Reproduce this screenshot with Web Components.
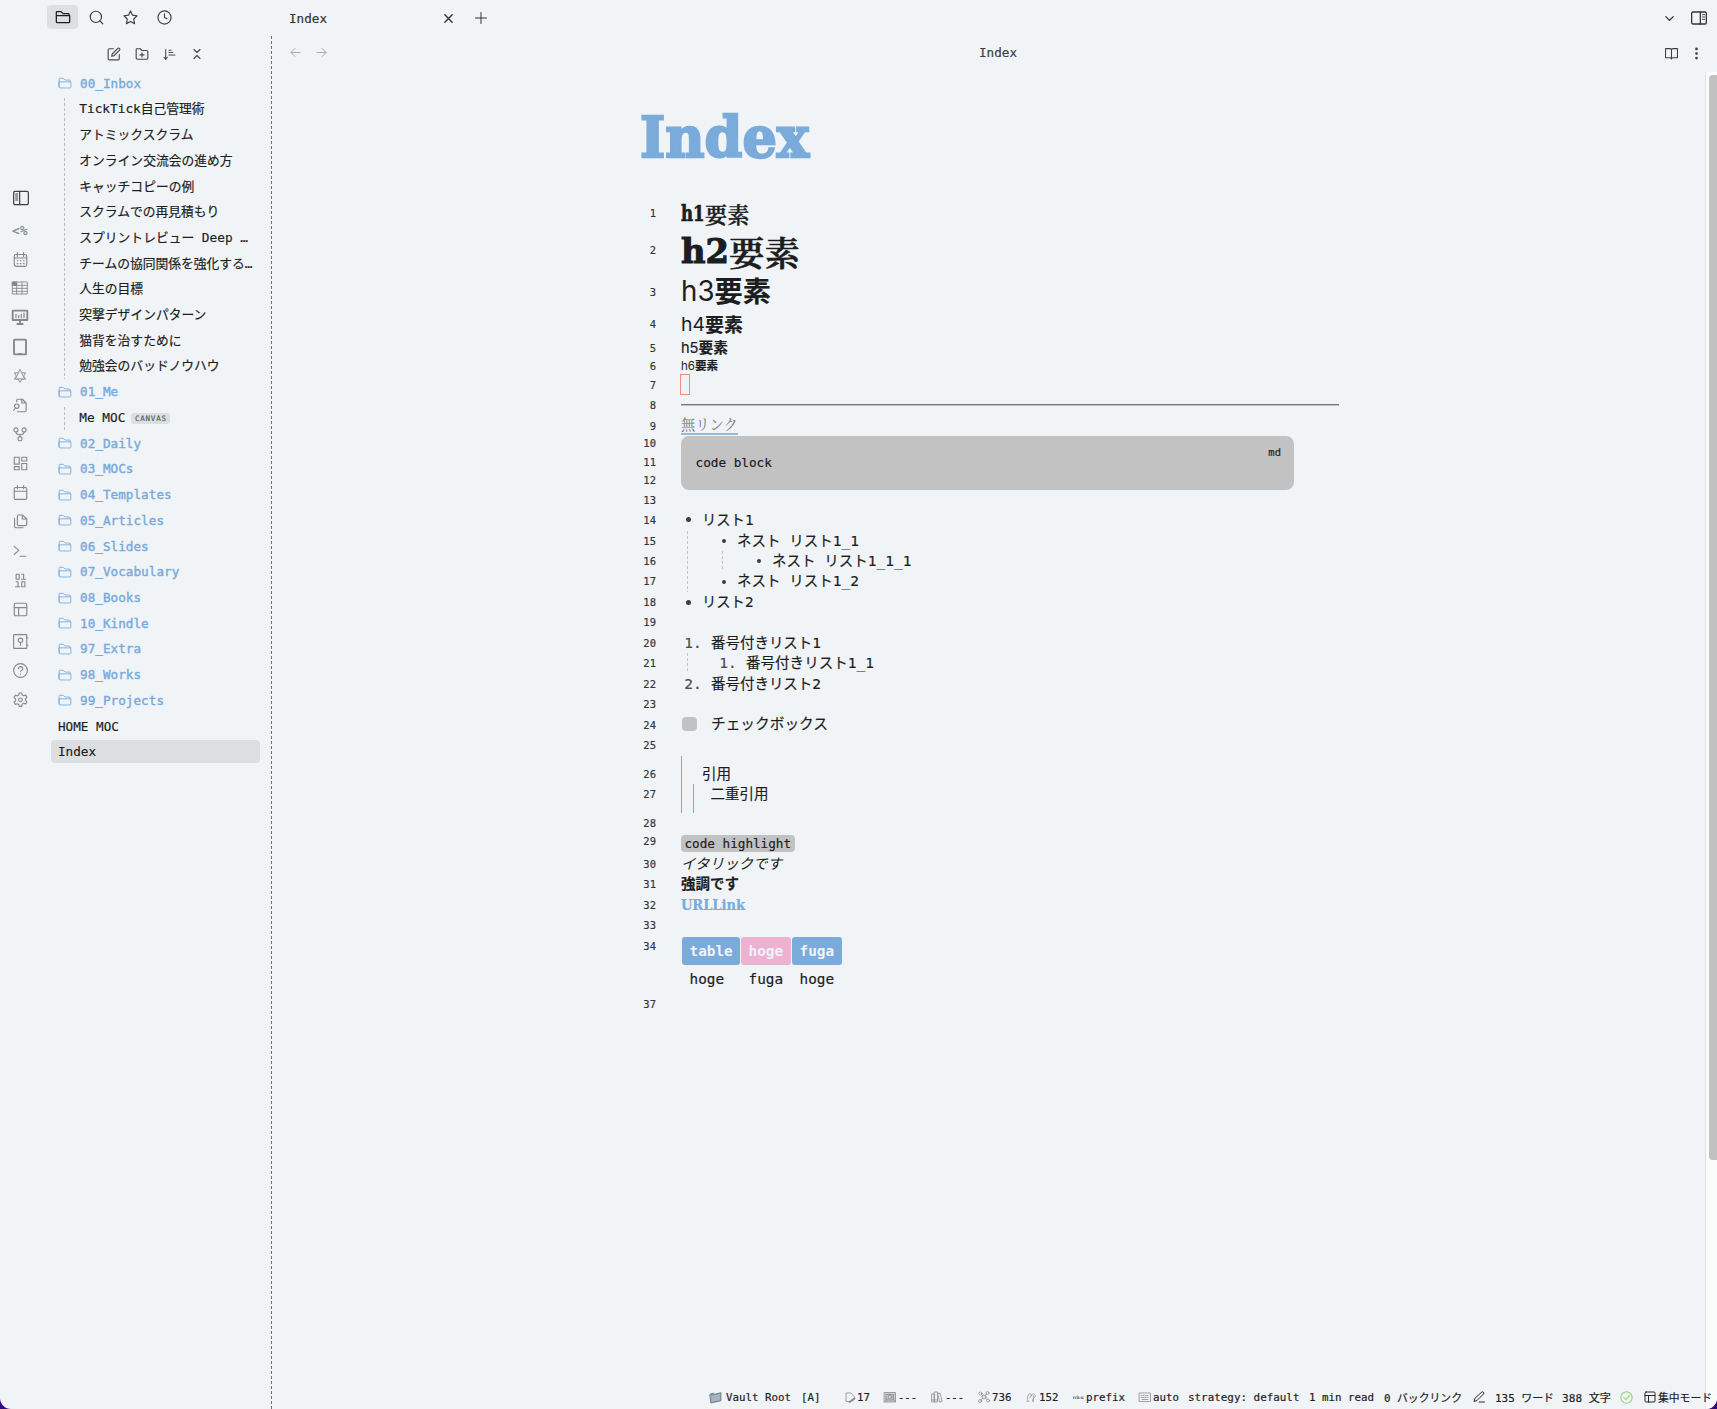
<!DOCTYPE html>
<html lang="ja">
<head>
<meta charset="utf-8">
<title>Index</title>
<style>
html,body{margin:0;height:100%}
body{background:#2e0a86;font-family:"DejaVu Sans Mono","Noto Sans CJK JP",monospace;font-size:12.65px;color:#1c1d1e;overflow:hidden;-webkit-text-stroke:.18px}
</style>
</head>
<body>
<vault-app></vault-app>
<script>
const ICONS={
folder:'<path d="M2 19V5a1 1 0 0 1 1-1h6l3 3h8a1 1 0 0 1 1 1v2M2 10h20v9a1.5 1.5 0 0 1-1.5 1.5h-17A1.5 1.5 0 0 1 2 19z"/>',
search:'<circle cx="11" cy="11" r="9"/><path d="m22 22-4.6-4.6"/>',
star:'<path d="m12 1.500 3.200 6.800 7.300 1-5.300 5.100 1.300 7.400-6.500-3.500-6.500 3.500 1.300-7.400L1.500 9.300l7.300-1z"/>',
clock:'<circle cx="12" cy="12" r="10.500"/><path d="M12 6v6l4 2"/>',
edit:'<path d="M11 3H4a2 2 0 0 0-2 2v15a2 2 0 0 0 2 2h15a2 2 0 0 0 2-2v-7"/><path d="M18.500 2.500a2.100 2.100 0 0 1 3 3L12 15l-4 1 1-4z"/>',
folderplus:'<path d="M4 21a2 2 0 0 1-2-2V4a1 1 0 0 1 1-1h6l3 3h8a2 2 0 0 1 2 2v11a2 2 0 0 1-2 2zM12 10v7M8.500 13.500h7"/>',
sort:'<path d="m2 17 3 4 3-4M5 20V3M11 4h4M11 8.500h7M11 13h11"/>',
collapse:'<path d="m6 21 6-6 6 6M6 3l6 6 6-6"/>',
x:'<path d="M4 4l16 16M20 4 4 20"/>',
plus:'<path d="M12 1v22M1 12h22"/>',
left:'<path d="M22 12H3M11 3l-9 9 9 9"/>',
right:'<path d="M2 12h19M13 3l9 9-9 9"/>',
down:'<path d="m4 8 8 8 8-8"/>',
panelright:'<rect x="1" y="3" width="22" height="18" rx="2"/><path d="M14 3v18" /><path stroke-width="1.300" d="M17 7h3.500M17 10.500h3.500M17 14h3.500"/>',
panelleft:'<rect x="1" y="2" width="22" height="20" rx="2"/><path d="M10 2v20"/><path stroke-width="1.600" d="M4 6h3M4 9h3M4 12h3M4 15h3"/>',
book:'<path d="M1 3h8a3 3 0 0 1 3 3v16a3 3 0 0 0-3-2H1zM23 3h-8a3 3 0 0 0-3 3v16a3 3 0 0 1 3-2h8z"/>',
dots:'<g fill="currentColor"><circle cx="12" cy="3.500" r="1.500"/><circle cx="12" cy="12" r="1.500"/><circle cx="12" cy="20.500" r="1.500"/></g>',
caldots:'<rect x="2" y="4" width="20" height="19" rx="3"/><path d="M7 1v6M17 1v6M2 9.500h20"/><path stroke-linecap="butt" stroke-dasharray="2.500 2.500" d="M6 14h13M6 18.500h13"/>',
table:'<g stroke-width="1.300"><rect x="1" y="3" width="22" height="18"/><path d="M1 8h22M1 12.500h22M1 17h22M7 3v18M15 3v18"/><path fill="currentColor" d="M1 3h6v5H1z"/></g>',
present:'<path stroke-width="2.800" d="M1 2.500h22v14H1zM12 17v5M8 22.500h8"/><path d="M6 13V8M10 13v-3M14 13V8M18 13V6"/>',
tablet:'<rect x="3" y="1" width="18" height="22" rx="1" stroke-width="2.800"/><path d="M10 22h4"/>',
hexa:'<path stroke-width="1.500" d="M12 1l3.200 5.500h6.300L18.400 12l3.100 5.500h-6.300L12 23l-3.200-5.500H2.500L5.600 12 2.500 6.500h6.300zM9 7l-4 8.500M15 7l4 8.500M7 17h10"/>',
filesearch:'<path d="M6 6V3.500A1.500 1.500 0 0 1 7.500 2H15l6 6v12a2 2 0 0 1-2 2H7M14 2v6h7"/><circle cx="6" cy="13" r="3.500"/><path d="m1 20 3-4"/>',
fork:'<circle cx="5" cy="5" r="3.500"/><circle cx="19" cy="5" r="3.500"/><circle cx="12" cy="20" r="3.500"/><path d="M5 9c0 3 2 4 7 4s7-1 7-4M12 13v3"/>',
dash:'<path d="M2 2h8v11H2zM14 2h8v6h-8zM14 12h8v10h-8zM2 17h8v5H2z"/>',
cal:'<rect x="2" y="4" width="20" height="19" rx="2"/><path d="M7 1v5M17 1v5M2 10h20"/>',
files:'<path d="M15 1.500H9a2 2 0 0 0-2 2v13a2 2 0 0 0 2 2h11a2 2 0 0 0 2-2V8zM15 2v6h6"/><path d="M2.500 7v13a2 2 0 0 0 2 2H16"/>',
term:'<path d="m2 4 8 7-8 7M12 21h10"/>',
binary:'<rect x="5" y="2" width="5" height="8"/><path d="M14 2h3v8M13.500 10H20"/><path d="M5 14h3v8M4 22h7"/><rect x="14" y="14" width="5" height="8"/>',
layout:'<rect x="2" y="2" width="20" height="20" rx="2"/><path d="M2 9h20M9 9v13"/>',
vault:'<rect x="1" y="1" width="21" height="22" rx="1"/><circle cx="12" cy="10" r="3.500"/><path d="M12 14v4M22 6h2M22 18h2"/>',
help:'<circle cx="12" cy="12" r="11"/><path d="M8.500 9a3.500 3.500 0 0 1 7 .500c0 2-3.500 2.500-3.500 4.500M12 17.500v.500"/>',
gear:'<path d="M10 1.500h4l.700 3.300 2.300 1.300 3.300-1.100 2 3.500-2.500 2.300v2.600l2.500 2.300-2 3.500-3.300-1.100-2.300 1.300L14 23h-4l-.700-2.900L7 18.800l-3.300 1.100-2-3.500 2.500-2.300v-2.600L1.700 8.600l2-3.500 3.300 1.100 2.300-1.300z"/><circle cx="12" cy="12.500" r="3"/>',
sfolder:'<path fill="#8e9aa6" stroke="#697684" d="M2 6l6-2 3 2 11-3v15L4 22z"/><path fill="#aab4be" stroke="none" d="M4 9l17-4-1 12L5 20z"/>',
note:'<path d="M12 21H4V4h10l7 8-2 6"/><path stroke-width="4" d="m11 22 10-7"/>',
photo:'<path d="M1 3h22v19H1z" fill="#ccc"/><path d="M5 7h14v11H5z"/><circle cx="12" cy="12" r="4"/><path d="M1 22 7 16M23 22l-6-6"/>',
books:'<path d="M2 6h5v16H2zM7 2h6v20H7zM14 5l4-1 4 17-4 1zM3 18h9"/>',
graph:'<circle cx="5" cy="5" r="3"/><circle cx="19" cy="4" r="3"/><circle cx="12" cy="12" r="4"/><circle cx="4" cy="20" r="3"/><circle cx="20" cy="19" r="3"/><path d="M7 7l3 3M14 10l3-4M9 14l-3 4M15 14l3 3"/>',
link:'<path d="M3 18c0-7 1-14 6-14s2 9-1 9M11 9c2-7 10-6 9 0s-7 5-6 11M2 20h5M16 8v13"/>',
abc:'<path stroke-width="2.500" d="M1 14v-3h4v3M9 9v5h4v-3H9M22 11h-4v3h4"/>',
kbd:'<rect x="1" y="4" width="22" height="17"/><path stroke-dasharray="2 2" d="M4 9h16M4 13h16"/><path d="M6 17h12"/>',
pen:'<path d="M17 2.500a2.500 2.500 0 0 1 4 3.500L8 19l-6 2 2-6zM12 22h11"/>',
check:'<circle cx="12" cy="12" r="10.500"/><path d="m7 12 4 4 6-7"/>'
};
const ic=(n,s=16,extra='')=>`<ui-icon name="${n}" size="${s}" ${extra}></ui-icon>`;
const fit=(t,w,style='')=>`<fit-text w="${w}" style="${style}">${t}</fit-text>`;
/* Vertical flow of items given as [centre, height, html]; the gaps become margins. */
const stack=(items,start)=>{let e=start;return items.map(([c,h,html,cls=''])=>{const m=c-h/2-e;e=c+h/2;return `<div class="row ${cls}" style="height:${h}px;margin-top:${m.toFixed(2)}px">${html}</div>`}).join('')};
/* Horizontal flow of items given as [left, width, html]. */
const line=(items,start)=>{let e=start;return items.map(([x,w,html])=>{const m=x-e;e=x+w;return `<span class="cell" style="width:${w}px;margin-left:${m.toFixed(2)}px">${html}</span>`}).join('')};
const FLOW='.row{display:flex;align-items:center;white-space:nowrap}.cell{display:flex;flex:none;align-items:center;justify-content:center;white-space:nowrap}';

class Base extends HTMLElement{
 connectedCallback(){ if(this.shadowRoot) return; const r=this.attachShadow({mode:'open'}); r.innerHTML=`<style>:host{display:block;box-sizing:border-box}${FLOW}${this.css()}</style>${this.html()}`; this.ready&&this.ready(); }
 css(){return ''} html(){return '<slot></slot>'}
}
const def=(n,c)=>customElements.define(n,c);

def('ui-icon',class extends Base{
 css(){return ':host{display:inline-flex;flex:none}svg{display:block}'}
 html(){const s=this.getAttribute('size'),w=this.getAttribute('sw')||1.9;return `<svg width="${s}" height="${s}" viewBox="0 0 24 24" fill="none" stroke="currentColor" stroke-width="${w}" stroke-linejoin="round" stroke-linecap="round" overflow="visible">${ICONS[this.getAttribute('name')]}</svg>`}
});
def('fit-text',class extends Base{
 css(){return `:host{display:inline-block;flex:none;width:${this.getAttribute('w')}px;white-space:pre}span{display:inline-block;transform-origin:0 50%}`}
 html(){return '<span><slot></slot></span>'}
 ready(){const s=this.shadowRoot.querySelector('span');s.style.transform=`scaleX(${this.getAttribute('w')/s.getBoundingClientRect().width})`}
});
def('side-ribbon',class extends Base{
 css(){return ':host{width:40px;flex:none;color:#858789}.row{justify-content:center}.dark{color:#3c3e40;padding-left:2px}.t{font-size:12.500px;letter-spacing:.4px;font-variant-ligatures:none;-webkit-text-stroke:.2px}'}
 html(){const L=[['panelleft',197.500,16],['',230],['caldots',259.500,15],['table',288,16],['present',317,16],['tablet',346.500,16],['hexa',375.500,14],['filesearch',405,15],['fork',434,14],['dash',463.500,15],['cal',492.500,15],['files',521.500,15],['term',550.500,14],['binary',580,15],['layout',609,15],['vault',641,15],['help',670,15],['gear',699.500,15]];
 return stack(L.map(([n,c,s])=>[c,18,n?ic(n,s,'sw="1.800"'):'<span class="t">&lt;%</span>',n=='panelleft'?'dark':'']),0)}
});
def('tree-item',class extends Base{
 css(){return `:host{height:25.710px;display:flex;align-items:center;white-space:nowrap;padding-left:18px}
 :host([folder]){color:#78abdb;-webkit-text-stroke:.4px #78abdb;letter-spacing:.03px}:host([folder]) ui-icon{margin-right:8px}
 :host([child]){padding-left:0;font-size:12.780px}:host([child]) .box{line-height:17px;margin-top:-.500px}
 :host([active]) .box{background:#dbdfe0;border-radius:4px;width:209px;height:23px;line-height:23px;box-sizing:border-box;padding-left:7.500px;margin-left:-7.500px}`}
 html(){return (this.hasAttribute('folder')?ic('folder',14,'sw="1.500"'):'')+'<div class="box"><slot></slot></div>'}
});
def('tree-group',class extends Base{css(){return ':host{margin-left:24px;padding-left:15.300px;background:repeating-linear-gradient(#b9bcbf 0 3px,transparent 3px 5px) 0 2px/1px 100% no-repeat}'}});
def('canvas-tag',class extends Base{css(){return ':host{display:inline-block;background:#dcdfe0;color:#5b5d5f;border-radius:3px;font-size:7.500px;line-height:11px;height:11px;padding:0 3.500px;margin-left:6px;letter-spacing:.8px;vertical-align:1px;-webkit-text-stroke:.2px}'}});
def('file-sidebar',class extends Base{
 css(){return `:host{width:231px;flex:none;color:#1c1d1e}.tabs{height:34px;display:flex;color:#3f4143}.tools{color:#444648;height:36.600px;display:flex;padding-top:4px;box-sizing:border-box}.on{background:#dce0e1;color:#1d1e20;height:24px;width:31px;margin:5px 0 0 7px;border-radius:4px;display:flex;align-items:center;justify-content:center}`}
 html(){const f=n=>`<tree-item folder>${n}</tree-item>`,c=n=>`<tree-item child>${n}</tree-item>`;
 return `<div class="tabs"><div class="on">${ic('folder',16)}</div>${line([[88.500,16,ic('search',15)],[122.500,16,ic('star',15)],[156,16,ic('clock',15)]],78)}</div>
 <div class="tools">${line([[106.500,15,ic('edit',14)],[134.500,15,ic('folderplus',14)],[162,15,ic('sort',13)],[189,15,ic('collapse',12,'sw="2.300"')]],40)}</div>
 ${f('00_Inbox')}<tree-group>${['TickTick自己管理術','アトミックスクラム','オンライン交流会の進め方','キャッチコピーの例','スクラムでの再見積もり','スプリントレビュー Deep …','チームの協同関係を強化する…','人生の目標','突撃デザインパターン','猫背を治すために','勉強会のバッドノウハウ'].map(c).join('')}</tree-group>
 ${f('01_Me')}<tree-group>${c('Me MOC<canvas-tag>CANVAS</canvas-tag>')}</tree-group>
 ${['02_Daily','03_MOCs','04_Templates','05_Articles','06_Slides','07_Vocabulary','08_Books','10_Kindle','97_Extra','98_Works','99_Projects'].map(f).join('')}
 <tree-item>HOME MOC</tree-item><tree-item active>Index</tree-item>`}
});
def('pane-divider',class extends Base{css(){return ':host{width:1px;flex:none;margin-top:36px;background:repeating-linear-gradient(#707274 0 3px,transparent 3px 5px)}'}});
def('tab-header',class extends Base{
 css(){return '.a{height:36px;display:flex;color:#303234}.b{height:36px;display:flex;color:#3c3e40}.b{padding-bottom:2px;box-sizing:border-box}.g{color:#9b9ea0}'}
 html(){return `<div class="a">${line([[289,38,fit('Index',38,'margin-top:1px')],[441,14,ic('x',11,'sw="3"')],[473,15,ic('plus',12,'sw="2"')],[1662,15,ic('down',11,'sw="2.800"')],[1691,16,ic('panelright',16)]],272)}</div>
 <div class="b">${line([[289,13,`<span class="g">${ic('left',11)}</span>`],[315,13,`<span class="g">${ic('right',11)}</span>`],[978.500,38,fit('Index',38,'margin-top:-2px')],[1664.500,13,ic('book',13)],[1689,15,ic('dots',13)]],272)}</div>`}
});
def('line-gutter',class extends Base{
 css(){return ':host{width:384px;flex:none;font-size:10.500px;color:#333537}.row{justify-content:flex-end}'}
 html(){const C=[213.300,250,292,324,348,366,385,405,426,443,462,480,500,520,541,561,581,602,622,643,663,684,704,725,745,774,794,823,841,864,884,905,925,946,1004];
 return stack(C.map((c,i)=>[c,12,i==34?'37':i+1]),72)}
});
def('code-block',class extends Base{css(){return ':host{width:613px;height:54px;background:#c2c2c2;border-radius:8px;display:flex;justify-content:space-between;padding:17px 13px 0 14.500px;line-height:19px;font-size:12.700px}small{font-size:10.500px;line-height:12px;margin-top:-7px}'}
 html(){return '<slot></slot><small>md</small>'}});
def('block-quote',class extends Base{css(){return ':host{border-left:1px solid #78abdb;width:100%;height:100%}'}});
def('data-table',class extends Base{
 css(){return `:host{font-size:14.350px}.r{display:grid;grid-template-columns:58px 50px 50px;gap:1px;padding-left:1px}.h>*{height:28px;line-height:28px;background:#7babdb;color:#f0f4f7;font-weight:700;-webkit-text-stroke:0;border-radius:3px;padding-left:7.500px}.h>*:nth-child(2){background:#edb1d1}.d>*{height:28px;line-height:28px;padding-left:7.500px}`}
 html(){return '<div class="r h"><span>table</span><span>hoge</span><span>fuga</span></div><div class="r d"><span>hoge</span><span>fuga</span><span>hoge</span></div>'}});
def('note-body',class extends Base{
 css(){return `:host{width:658px;margin-left:25px;flex:none;font-size:14.500px}
 .serif{font-family:"Noto Serif CJK JP","DejaVu Serif","Liberation Serif","Noto Sans CJK JP",serif}
 .slab{font-family:"DejaVu Serif",serif;font-weight:700}.cjs{font-family:"Noto Serif CJK JP","Noto Serif JP","Noto Sans CJK JP",serif;font-weight:600;-webkit-text-stroke:.4px}
 .thin{font-family:Inter,sans-serif;font-weight:400;-webkit-text-stroke:0}.b{font-weight:700;font-family:"Noto Sans CJK JP",sans-serif}
 .row{line-height:1}
 .caret{width:8px;height:19px;border:1px solid #f58b87;margin-left:-1px}
 .hr{width:658px;height:2px;background:linear-gradient(#737577 50%,#c0c3c5 50%)}
 .link{color:#77797b;border-bottom:2px solid #91bbe3;height:18px;line-height:18px;width:57px;font-size:14.300px;-webkit-text-stroke:0}
 .dot{width:5px;height:5px;border-radius:50%;background:#3b3d3f}.dot.s{width:4px;height:4px}
 .mk{color:#4a4c4e}
 .guide{background:repeating-linear-gradient(#c3c6c8 0 3px,transparent 3px 5px);width:1px;height:20.500px}
 .cb{width:15px;height:14px;border-radius:4px;background:#c2c2c2;margin-top:-2px}
 .code{background:#c2c2c2;border-radius:4px;width:114px;height:17px;line-height:17px;box-sizing:border-box;padding-left:3.500px;font-size:12.650px}
 block-quote .in{margin-top:28px;margin-left:11px;height:28.500px}`}
 html(){const g='<span class="guide"></span>';
 const li=(items)=>line(items,681);
 return stack([
 [213.500,22,`<span class="slab" style="font-size:21.500px;-webkit-text-stroke:.7px">${fit('h1',23.500)}</span><span class="cjs" style="font-size:22px">${fit('要素',44.500)}</span>`],
 [251,36,`<span class="slab" style="font-size:34px;-webkit-text-stroke:1.100px">${fit('h2',48)}</span><span class="cjs" style="font-size:34.500px;-webkit-text-stroke:.6px">${fit('要素',71)}</span>`],
 [291,30,`<span class="thin" style="font-size:28px">${fit('h3',33.500)}</span><span class="b" style="font-size:28.200px;margin-top:-1px">要素</span>`],
 [324,20,`<span class="thin" style="font-size:19px">${fit('h4',24)}</span><span class="b" style="font-size:19px;margin-top:-1px">要素</span>`],
 [347.700,16,`<span class="thin" style="font-size:15px;-webkit-text-stroke:.2px">${fit('h5',17.500)}</span><span class="b" style="font-size:14.700px">要素</span>`],
 [366,13,`<span class="thin" style="font-size:11.500px;margin-top:1px">${fit('h6',14)}</span><span class="b" style="font-size:11.600px">要素</span>`],
 [384.500,21,'<span class="caret"></span>'],
 [405,2,'<span class="hr"></span>'],
 [425,19,'<span class="serif link">無リンク</span>'],
 [463,54,'<code-block>code block</code-block>'],
 [520,20,li([[686,5,'<i class="dot"></i>'],[702,51.500,fit('リスト1',51.500)]])],
 [541,20.500,li([[687,1,g],[722,4,'<i class="dot s"></i>'],[737,122,fit('ネスト リスト1_1',122)]])],
 [561.200,20.500,li([[687,1,g],[722,1,g],[757,4,'<i class="dot s"></i>'],[772,139.500,fit('ネスト リスト1_1_1',139.500)]])],
 [581.500,20.500,li([[687,1,g],[722,4,'<i class="dot s"></i>'],[737,122,fit('ネスト リスト1_2',122)]])],
 [602,20,li([[686,5,'<i class="dot"></i>'],[702,51.500,fit('リスト2',51.500)]])],
 [643,20,li([[684,18,'<span class="mk">1.</span>'],[710.500,110,fit('番号付きリスト1',110)]])],
 [663,20.500,li([[687,1,g],[719,18,'<span class="mk">1.</span>'],[745.500,128,fit('番号付きリスト1_1',128)]])],
 [684,20,li([[684,18,'<span class="mk">2.</span>'],[710.500,110,fit('番号付きリスト2',110)]])],
 [724.500,20,li([[682,15,'<span class="cb"></span>'],[711,117,fit('チェックボックス',117)]])],
 [784.500,57,`<block-quote><div style="height:0"><div style="padding:9.500px 0 0 20px;line-height:16px">引用</div></div><block-quote class="in"><div style="padding:1.500px 0 0 16.500px;line-height:16px">二重引用</div></block-quote></block-quote>`],
 [843.500,17,'<span class="code">'+'code highlight'+'</span>'],
 [864,19,`<i style="-webkit-text-stroke:0">${fit('イタリックです',101)}</i>`],
 [884.500,19,fit('強調です',58,'font-weight:700')],
 [905,19,`<span class="slab" style="color:#78abdb;font-size:14px">${fit('URLLink',64)}</span>`],
 [965,56,'<data-table></data-table>']
 ],180)}
});
def('note-title',class extends Base{css(){return ':host{height:108px;padding:31.500px 0 0 367.500px;font:700 56.500px/66px "DejaVu Serif",serif;color:#7aabdb;-webkit-text-stroke:2.300px #7aabdb}'}
 html(){return fit('Index',169)}});
def('note-editor',class extends Base{
 css(){return ':host{flex:1;display:flex;min-height:0}.doc{flex:1}.cols{display:flex}line-gutter{margin-top:-108px}'}
 html(){return '<div class="doc"><note-title></note-title><div class="cols"><line-gutter></line-gutter><note-body></note-body></div></div><scroll-track></scroll-track>'}});
def('scroll-track',class extends Base{css(){return ':host{width:12px;flex:none;background:#fafbfb;border-left:1px solid #e1e3e4;padding:3px 0 0 3px}i{display:block;width:8px;height:1085px;border-radius:4px 0 0 4px;background:#c1c1c1}'}html(){return '<i></i>'}});
def('status-bar',class extends Base{
 css(){return ':host{height:24px;display:flex;margin-top:-24px;position:relative;font-size:10.800px;color:#1f2022}.q{color:#8a8c8e;display:flex}.gr{color:#92cf72;display:flex}'}
 html(){const q=(n,s=12)=>`<span class="q">${ic(n,s,'sw="1.600"')}</span>`,t=(x,w,s)=>[x,w,fit(s,w)];
 return line([[709,13,q('sfolder',13)],t(726,65,'Vault Root'),t(801,19.500,'[A]'),[844,12,q('note')],t(857,13,'17'),[884,12,q('photo')],t(898,19,'---'),[931,12,q('books')],t(945,19,'---'),[978,12,q('graph')],t(992,19.500,'736'),[1026,11,q('link',11)],t(1039,19.500,'152'),[1073,11,q('abc',11)],t(1086,39,'prefix'),[1139,12,q('kbd')],t(1153,26,'auto'),t(1188,111.500,'strategy: default'),t(1309,65,'1 min read'),t(1383.500,78,'0 バックリンク'),[1473,12,ic('pen',12)],t(1495,59,'135 ワード'),t(1561.500,49,'388 文字'),[1620,13,`<span class="gr">${ic('check',13)}</span>`],[1644,12,ic('layout',12)],t(1658,54,'集中モード')],272)}});
def('main-pane',class extends Base{css(){return ':host{flex:1;display:flex;flex-direction:column;min-width:0}'}
 html(){return '<tab-header></tab-header><note-editor></note-editor><status-bar></status-bar>'}});
def('vault-app',class extends Base{
 css(){return ':host{display:flex;height:100vh;width:100vw;background:#f0f4f7;border-radius:0 0 11px 11px;overflow:hidden}'}
 html(){return '<side-ribbon></side-ribbon><file-sidebar></file-sidebar><pane-divider></pane-divider><main-pane></main-pane>'}});
</script>
</body>
</html>
